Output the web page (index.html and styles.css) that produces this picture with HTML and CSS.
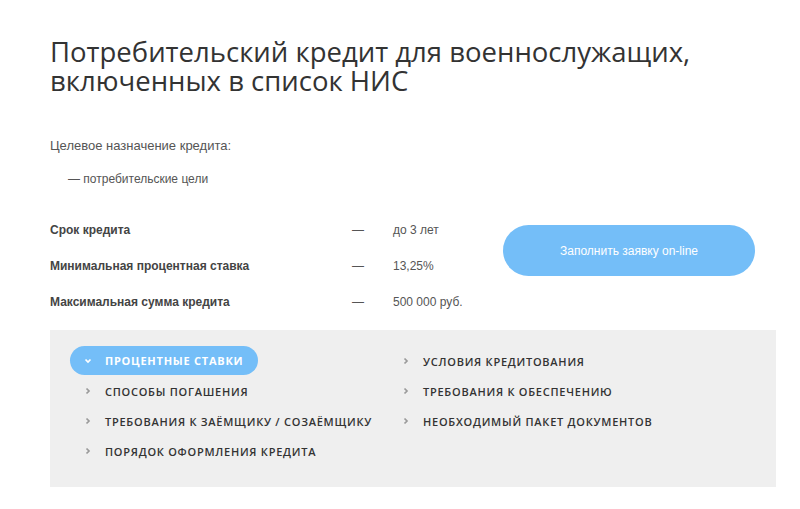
FILE: index.html
```html
<!DOCTYPE html>
<html lang="ru">
<head>
    <meta charset="UTF-8">
    <meta name="viewport" content="width=device-width, initial-scale=1.0">
    <title>Потребительский кредит</title>
    <link rel="stylesheet" href="styles.css">
</head>
<body>
<div class="page">
    <h1 class="title">Потребительский кредит для военнослужащих,<br>включенных в список НИС</h1>

    <p class="purpose">Целевое назначение кредита:</p>
    <p class="purpose_item">— потребительские цели</p>

    <div class="terms">
        <ul class="terms_list">
            <li><span class="t_name">Срок кредита</span><span class="t_dash">—</span><span class="t_val">до 3 лет</span></li>
            <li><span class="t_name">Минимальная процентная ставка</span><span class="t_dash">—</span><span class="t_val">13,25%</span></li>
            <li><span class="t_name">Максимальная сумма кредита</span><span class="t_dash">—</span><span class="t_val">500 000 руб.</span></li>
        </ul>
        <div class="btn_apply">Заполнить заявку on-line</div>
    </div>

    <div class="tabs">
        <ul class="tabs_col">
            <li class="tab tab_active">
                <svg class="chev" width="8" height="8" viewBox="0 0 8 8"><polyline points="1.5,2.5 4,5 6.5,2.5" fill="none" stroke="#fff" stroke-width="1.7"/></svg>
                Процентные ставки
            </li>
            <li class="tab">
                <svg class="chev" width="8" height="8" viewBox="0 0 8 8"><polyline points="2.5,1.5 5,4 2.5,6.5" fill="none" stroke="#9a9a9a" stroke-width="1.7"/></svg>
                Способы погашения
            </li>
            <li class="tab">
                <svg class="chev" width="8" height="8" viewBox="0 0 8 8"><polyline points="2.5,1.5 5,4 2.5,6.5" fill="none" stroke="#9a9a9a" stroke-width="1.7"/></svg>
                Требования к заёмщику / созаёмщику
            </li>
            <li class="tab">
                <svg class="chev" width="8" height="8" viewBox="0 0 8 8"><polyline points="2.5,1.5 5,4 2.5,6.5" fill="none" stroke="#9a9a9a" stroke-width="1.7"/></svg>
                Порядок оформления кредита
            </li>
        </ul>
        <ul class="tabs_col">
            <li class="tab">
                <svg class="chev" width="8" height="8" viewBox="0 0 8 8"><polyline points="2.5,1.5 5,4 2.5,6.5" fill="none" stroke="#9a9a9a" stroke-width="1.7"/></svg>
                Условия кредитования
            </li>
            <li class="tab">
                <svg class="chev" width="8" height="8" viewBox="0 0 8 8"><polyline points="2.5,1.5 5,4 2.5,6.5" fill="none" stroke="#9a9a9a" stroke-width="1.7"/></svg>
                Требования к обеспечению
            </li>
            <li class="tab">
                <svg class="chev" width="8" height="8" viewBox="0 0 8 8"><polyline points="2.5,1.5 5,4 2.5,6.5" fill="none" stroke="#9a9a9a" stroke-width="1.7"/></svg>
                Необходимый пакет документов
            </li>
        </ul>
    </div>
</div>
</body>
</html>
```

FILE: styles.css
```css
body {
    margin: 0;
    background: #fff;
    font-family: "Liberation Sans", Arial, sans-serif;
    color: #444;
}
ul {
    list-style: none;
    padding: 0;
    margin: 0;
}

.page {
    width: 726px;
    padding: 37px 0 0 50px;
}

.title {
    margin: 0;
    font-family: "Open Sans", sans-serif;
    font-weight: 400;
    font-size: 27.5px;
    line-height: 29px;
    color: #333;
}

.purpose {
    margin: 43px 0 0;
    font-size: 13px;
    line-height: 15px;
    color: #555;
}
.purpose_item {
    margin: 19px 0 0 18px;
    font-size: 12px;
    line-height: 14px;
    color: #555;
}

.terms {
    display: flex;
    align-items: flex-start;
    margin-top: 37px;
}
.terms_list {
    width: 453px;
}
.terms_list li {
    display: flex;
    font-size: 12px;
    line-height: 14px;
    height: 36px;
}
.t_name {
    width: 302px;
    font-weight: 700;
    color: #444;
}
.t_dash {
    width: 41px;
    color: #555;
}
.t_val {
    color: #555;
}

.btn_apply {
    width: 252px;
    height: 51px;
    margin-top: 2px;
    border-radius: 26px;
    background: #74bef8;
    color: #fff;
    font-size: 12px;

    display: flex;
    justify-content: center;
    align-items: center;
}

.tabs {
    display: grid;
    grid-template-columns: 318px 1fr;
    margin-top: -1px;
    padding: 16px 20px 21px;
    background: #efefef;
}
.tab {
    height: 30px;
    display: flex;
    align-items: center;
    padding-left: 14px;
    font-family: "Open Sans", sans-serif;
    font-weight: 600;
    font-size: 11px;
    letter-spacing: 0.75px;
    text-transform: uppercase;
    color: #333;
}
.chev {
    margin-right: 13px;
    flex-shrink: 0;
}
.tab_active {
    width: fit-content;
    height: 29px;
    margin-bottom: 1px;
    padding-right: 15px;
    border-radius: 15px;
    background: #74bef8;
    color: #fff;
    font-weight: 700;
}
```
